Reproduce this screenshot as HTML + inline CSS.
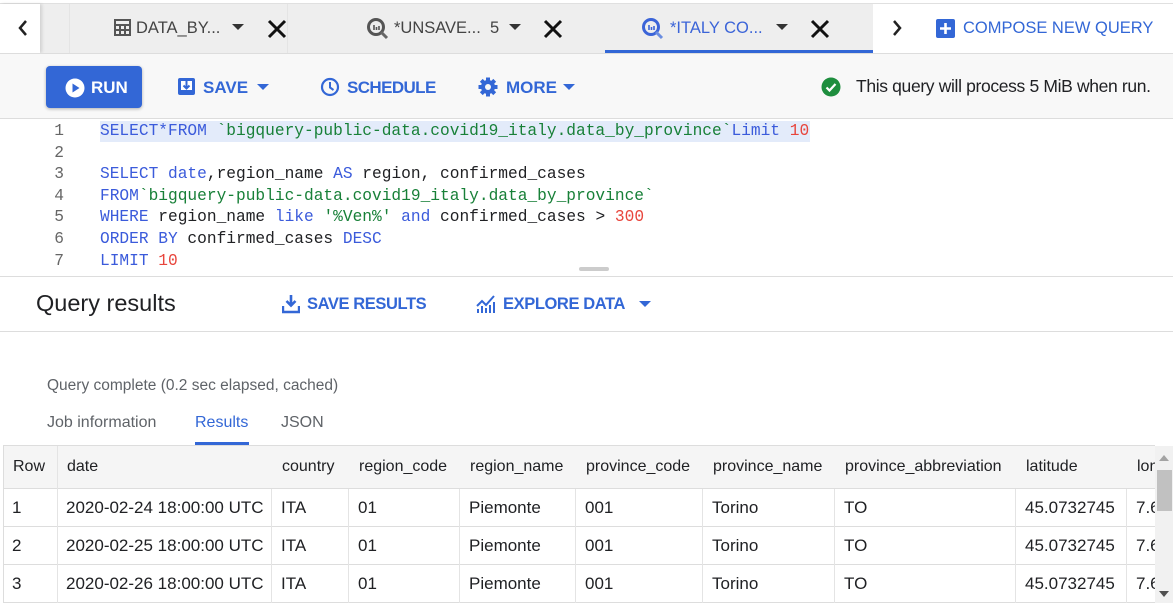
<!DOCTYPE html>
<html><head><style>
*{margin:0;padding:0;box-sizing:border-box}
body{width:1173px;height:603px;overflow:hidden;background:#fff;font-family:"Liberation Sans",sans-serif;position:relative;color:#202124}
.a{position:absolute;white-space:nowrap}
.mono{font-family:"Liberation Mono",monospace;font-size:16.2px;white-space:pre}
.kw{color:#3b5bdb}.st{color:#188038}.nu{color:#e8453c}
.blue{color:#3367d6;font-weight:bold;font-size:16px}
.cell{position:absolute;font-size:17px;white-space:nowrap}
</style></head><body>
<div class="a" style="left:0;top:3px;width:1173px;height:1px;background:#e0e0e0"></div>
<div class="a" style="left:0;top:4px;width:873px;height:49px;background:#eeeeee"></div>
<div class="a" style="left:0;top:4px;width:40px;height:49px;background:#fff;box-shadow:2px 0 3px rgba(0,0,0,.12)"></div>
<div class="a" style="left:69px;top:4px;width:1px;height:49px;background:#e4e4e4"></div>
<div class="a" style="left:287px;top:4px;width:1px;height:49px;background:#e4e4e4"></div>
<div class="a" style="left:605px;top:50px;width:268px;height:3px;background:#3367d6"></div>
<div class="a" style="left:0;top:53px;width:1173px;height:1px;background:#ddd"></div>
<svg class="a" style="left:16px;top:19px" width="14" height="18"><path d="M10 2 L4 9 L10 16" stroke="#222" stroke-width="2.5" fill="none"/></svg>
<svg class="a" style="left:114px;top:19px" width="18" height="18"><rect x="0" y="0" width="17" height="17" fill="#555"/><g fill="#eee"><rect x="2" y="2" width="13" height="3"/><rect x="2" y="7" width="3" height="3"/><rect x="7" y="7" width="3" height="3"/><rect x="12" y="7" width="3" height="3"/><rect x="2" y="12" width="3" height="3"/><rect x="7" y="12" width="3" height="3"/><rect x="12" y="12" width="3" height="3"/></g></svg>
<div class="a" style="left:136px;top:19px;font-size:16.5px;color:#444">DATA_BY...</div>
<svg class="a" style="left:232px;top:24px" width="12" height="8"><path d="M0 0H12L6 6Z" fill="#333"/></svg>
<svg class="a" style="left:267px;top:19px" width="20" height="20"><path d="M2 2L18 18M18 2L2 18" stroke="#111" stroke-width="3"/></svg>
<svg class="a" style="left:366px;top:17px" width="24" height="24"><circle cx="10" cy="10" r="7.5" stroke="#555" stroke-width="3" fill="none"/><path d="M15 15L21 21" stroke="#666" stroke-width="3"/><path d="M8 8v5M10.5 10v3M13 9v4" stroke="#555" stroke-width="1.6"/></svg>
<div class="a" style="left:394px;top:19px;font-size:16.5px;color:#444">*UNSAVE...&nbsp; 5</div>
<svg class="a" style="left:509px;top:24px" width="12" height="8"><path d="M0 0H12L6 6Z" fill="#333"/></svg>
<svg class="a" style="left:543px;top:19px" width="20" height="20"><path d="M2 2L18 18M18 2L2 18" stroke="#111" stroke-width="3"/></svg>
<svg class="a" style="left:641px;top:17px" width="24" height="24"><circle cx="10" cy="10" r="7.5" stroke="#3b64d8" stroke-width="3" fill="none"/><path d="M15 15L21 21" stroke="#6a8de0" stroke-width="3"/><path d="M8 8v5M10.5 10v3M13 9v4" stroke="#3b64d8" stroke-width="1.6"/></svg>
<div class="a" style="left:670px;top:19px;font-size:16.5px;color:#3b64d8">*ITALY CO...</div>
<svg class="a" style="left:776px;top:24px" width="12" height="8"><path d="M0 0H12L6 6Z" fill="#333"/></svg>
<svg class="a" style="left:810px;top:19px" width="20" height="20"><path d="M2 2L18 18M18 2L2 18" stroke="#111" stroke-width="3"/></svg>
<svg class="a" style="left:890px;top:19px" width="14" height="18"><path d="M4 2 L10 9 L4 16" stroke="#222" stroke-width="2.5" fill="none"/></svg>
<svg class="a" style="left:936px;top:19px" width="20" height="20"><rect width="19" height="19" rx="2" fill="#3367d6"/><path d="M9.5 4v11M4 9.5h11" stroke="#fff" stroke-width="2.6"/></svg>
<div class="a" style="left:963px;top:19px;font-size:16.5px;color:#3367d6">COMPOSE NEW QUERY</div>
<div class="a" style="left:0;top:54px;width:1173px;height:64px;background:#f8f8f8"></div>
<div class="a" style="left:0;top:118px;width:1173px;height:1px;background:#ddd"></div>
<div class="a" style="left:46px;top:66px;width:96px;height:42px;background:#3367d6;border-radius:4px;box-shadow:0 1px 3px rgba(0,0,0,.3)"></div>
<svg class="a" style="left:65px;top:78px" width="20" height="20"><circle cx="10" cy="10" r="9.5" fill="#fff"/><path d="M7.5 5.5L14.5 10L7.5 14.5Z" fill="#3367d6"/></svg>
<div class="a" style="left:91px;top:78px;font-size:17px;color:#fff;font-weight:bold">RUN</div>
<svg class="a" style="left:177px;top:77px" width="20" height="20"><rect x="1" y="1" width="17" height="17" rx="2" fill="#3367d6"/><rect x="4" y="4" width="11" height="9" fill="#fff"/><path d="M9.5 4v7M6.5 8.5l3 3 3-3" stroke="#3367d6" stroke-width="2" fill="none"/></svg>
<div class="a blue" style="left:203px;top:78px;font-size:17px">SAVE</div>
<svg class="a" style="left:257px;top:84px" width="12" height="8"><path d="M0 0H12L6 6Z" fill="#3367d6"/></svg>
<svg class="a" style="left:320px;top:77px" width="20" height="20"><circle cx="10" cy="10" r="8" stroke="#3367d6" stroke-width="2.2" fill="none"/><path d="M10 5v5.5l3.5 2.5" stroke="#3367d6" stroke-width="2" fill="none"/></svg>
<div class="a blue" style="left:347px;top:78px;font-size:17px;letter-spacing:-0.6px">SCHEDULE</div>
<svg class="a" style="left:478px;top:77px" width="20" height="20"><g fill="#3367d6"><circle cx="10" cy="10" r="7"/><rect x="8" y="0.5" width="4" height="19"/><rect x="0.5" y="8" width="19" height="4"/><rect x="8" y="0.5" width="4" height="19" transform="rotate(45 10 10)"/><rect x="8" y="0.5" width="4" height="19" transform="rotate(-45 10 10)"/></g><circle cx="10" cy="10" r="3" fill="#f8f8f8"/></svg>
<div class="a blue" style="left:506px;top:78px;font-size:17px">MORE</div>
<svg class="a" style="left:563px;top:84px" width="12" height="8"><path d="M0 0H12L6 6Z" fill="#3367d6"/></svg>
<svg class="a" style="left:821px;top:77px" width="20" height="20"><circle cx="10" cy="10" r="9.5" fill="#1e8e3e"/><path d="M5.5 10.5l3 3 6-6.5" stroke="#fff" stroke-width="2.2" fill="none"/></svg>
<div class="a" style="left:856px;top:76px;font-size:17.5px;letter-spacing:-0.35px;color:#202124">This query will process 5 MiB when run.</div>
<div class="a" style="left:100px;top:121px;width:710px;height:21px;background:#e3ebfa"></div>
<div class="a mono" style="left:50px;top:121px;line-height:21.6px;color:#666;text-align:right;width:14px">1
2
3
4
5
6
7</div>
<div class="a mono" style="left:100px;top:121px;line-height:21.6px;color:#202124"><span class="kw">SELECT*FROM</span> <span class="st">`bigquery-public-data.covid19_italy.data_by_province`</span><span class="kw">Limit</span> <span class="nu">10</span>

<span class="kw">SELECT date</span>,region_name <span class="kw">AS</span> region, confirmed_cases
<span class="kw">FROM</span><span class="st">`bigquery-public-data.covid19_italy.data_by_province`</span>
<span class="kw">WHERE</span> region_name <span class="kw">like</span> <span class="st">'%Ven%'</span> <span class="kw">and</span> confirmed_cases &gt; <span class="nu">300</span>
<span class="kw">ORDER BY</span> confirmed_cases <span class="kw">DESC</span>
<span class="kw">LIMIT</span> <span class="nu">10</span></div>
<div class="a" style="left:579px;top:267px;width:30px;height:4px;background:#ccc;border-radius:2px"></div>
<div class="a" style="left:0;top:276px;width:1173px;height:1px;background:#ddd"></div>
<div class="a" style="left:36px;top:290px;font-size:23.5px;color:#202124">Query results</div>
<svg class="a" style="left:282px;top:294px" width="18" height="20"><path d="M9 1v10M4.5 7l4.5 4.5 4.5-4.5" stroke="#3367d6" stroke-width="2.6" fill="none"/><path d="M1 12v6h16v-6" stroke="#3367d6" stroke-width="2.4" fill="none"/></svg>
<div class="a blue" style="left:307px;top:295px;font-size:16.5px;letter-spacing:-0.4px">SAVE RESULTS</div>
<svg class="a" style="left:476px;top:294px" width="20" height="20"><path d="M1 12l5-5 4 4 8-9" stroke="#3367d6" stroke-width="2" fill="none"/><g stroke="#3367d6" stroke-width="2"><path d="M2 19v-4M6 19v-7M10 19v-5M14 19v-8M18 19v-11"/></g></svg>
<div class="a blue" style="left:503px;top:295px;font-size:16.5px;letter-spacing:-0.4px">EXPLORE DATA</div>
<svg class="a" style="left:639px;top:301px" width="12" height="8"><path d="M0 0H12L6 6Z" fill="#3367d6"/></svg>
<div class="a" style="left:0;top:331px;width:1173px;height:1px;background:#ddd"></div>
<div class="a" style="left:47px;top:377px;font-size:15.5px;color:#5f6368">Query complete (0.2 sec elapsed, cached)</div>
<div class="a" style="left:47px;top:414px;font-size:16px;color:#5f6368">Job information</div>
<div class="a" style="left:195px;top:414px;font-size:16px;color:#3367d6">Results</div>
<div class="a" style="left:281px;top:414px;font-size:16px;color:#5f6368">JSON</div>
<div class="a" style="left:195px;top:442px;width:54px;height:3px;background:#3367d6"></div>
<div class="a" style="left:3px;top:445px;width:1152px;height:1px;background:#ddd"></div>
<div class="a" style="left:3px;top:446px;width:1152px;height:42px;background:#f5f5f5"></div>
<div class="a" style="left:3px;top:445px;width:1px;height:158px;background:#ddd"></div>
<div class="a" style="left:3px;top:488px;width:1152px;height:1px;background:#ddd"></div>
<div class="a" style="left:3px;top:526px;width:1152px;height:1px;background:#ddd"></div>
<div class="a" style="left:3px;top:564px;width:1152px;height:1px;background:#ddd"></div>
<div class="a" style="left:3px;top:602px;width:1152px;height:1px;background:#ddd"></div>
<div class="a" style="left:57px;top:446px;width:1px;height:157px;background:#e4e4e4"></div>
<div class="a" style="left:271px;top:489px;width:1px;height:114px;background:#e4e4e4"></div>
<div class="a" style="left:348px;top:489px;width:1px;height:114px;background:#e4e4e4"></div>
<div class="a" style="left:459px;top:489px;width:1px;height:114px;background:#e4e4e4"></div>
<div class="a" style="left:575px;top:489px;width:1px;height:114px;background:#e4e4e4"></div>
<div class="a" style="left:702px;top:489px;width:1px;height:114px;background:#e4e4e4"></div>
<div class="a" style="left:834px;top:489px;width:1px;height:114px;background:#e4e4e4"></div>
<div class="a" style="left:1015px;top:489px;width:1px;height:114px;background:#e4e4e4"></div>
<div class="a" style="left:1126px;top:489px;width:1px;height:114px;background:#e4e4e4"></div>
<div style="position:absolute;left:0;top:458px;width:1155px;height:30px;overflow:hidden">
<span class="cell" style="left:13px;font-size:16px">Row</span><span class="cell" style="left:67px;font-size:16px">date</span><span class="cell" style="left:282px;font-size:16px">country</span><span class="cell" style="left:359px;font-size:16px">region_code</span><span class="cell" style="left:470px;font-size:16px">region_name</span><span class="cell" style="left:586px;font-size:16px">province_code</span><span class="cell" style="left:713px;font-size:16px">province_name</span><span class="cell" style="left:845px;font-size:16px">province_abbreviation</span><span class="cell" style="left:1026px;font-size:16px">latitude</span><span class="cell" style="left:1137px;font-size:16px">lon</span>
</div>
<div style="position:absolute;left:0;top:498px;width:1155px;overflow:hidden;height:105px">
<span class="cell" style="left:12px">1</span><span class="cell" style="left:66px">2020-02-24 18:00:00 UTC</span><span class="cell" style="left:281px">ITA</span><span class="cell" style="left:358px">01</span><span class="cell" style="left:469px">Piemonte</span><span class="cell" style="left:585px">001</span><span class="cell" style="left:712px">Torino</span><span class="cell" style="left:844px">TO</span><span class="cell" style="left:1025px">45.0732745</span><span class="cell" style="left:1136px">7.6</span>
<span class="cell" style="left:12px;top:38px">2</span><span class="cell" style="left:66px;top:38px">2020-02-25 18:00:00 UTC</span><span class="cell" style="left:281px;top:38px">ITA</span><span class="cell" style="left:358px;top:38px">01</span><span class="cell" style="left:469px;top:38px">Piemonte</span><span class="cell" style="left:585px;top:38px">001</span><span class="cell" style="left:712px;top:38px">Torino</span><span class="cell" style="left:844px;top:38px">TO</span><span class="cell" style="left:1025px;top:38px">45.0732745</span><span class="cell" style="left:1136px;top:38px">7.6</span>
<span class="cell" style="left:12px;top:76px">3</span><span class="cell" style="left:66px;top:76px">2020-02-26 18:00:00 UTC</span><span class="cell" style="left:281px;top:76px">ITA</span><span class="cell" style="left:358px;top:76px">01</span><span class="cell" style="left:469px;top:76px">Piemonte</span><span class="cell" style="left:585px;top:76px">001</span><span class="cell" style="left:712px;top:76px">Torino</span><span class="cell" style="left:844px;top:76px">TO</span><span class="cell" style="left:1025px;top:76px">45.0732745</span><span class="cell" style="left:1136px;top:76px">7.6</span>
</div>
<div class="a" style="left:1155px;top:446px;width:18px;height:157px;background:#f1f1f1"></div>
<div class="a" style="left:1157px;top:470px;width:15px;height:41px;background:#c1c1c1"></div>
<svg class="a" style="left:1159px;top:455px" width="10" height="6"><path d="M0 6L5 0L10 6Z" fill="#a3a3a3"/></svg>
<svg class="a" style="left:1159px;top:591px" width="10" height="6"><path d="M0 0L5 6L10 0Z" fill="#505050"/></svg>
</body></html>
